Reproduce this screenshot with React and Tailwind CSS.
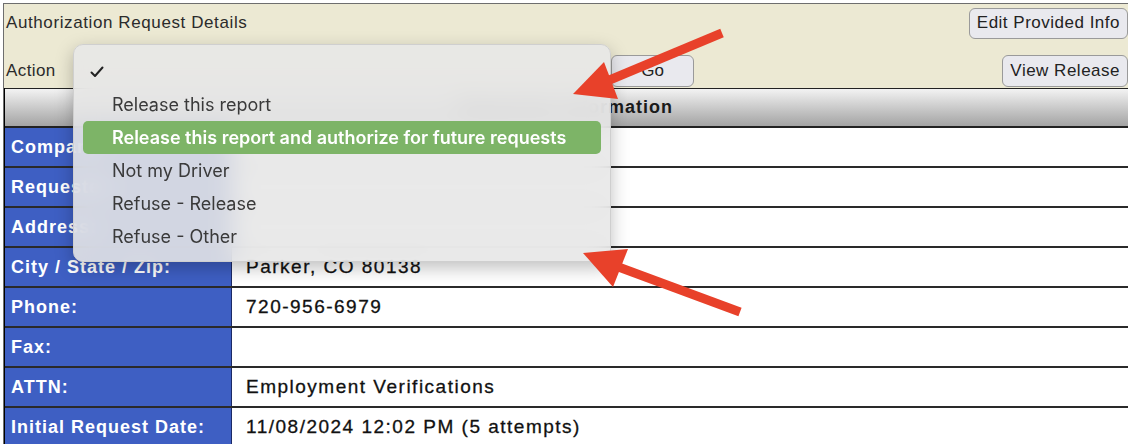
const rows = [
  { label: 'Company:', value: '' },
  { label: 'Requester:', value: '' },
  { label: 'Address:', value: '' },
  { label: 'City / State / Zip:', value: 'Parker, CO 80138' },
  { label: 'Phone:', value: '720-956-6979' },
  { label: 'Fax:', value: '' },
  { label: 'ATTN:', value: 'Employment Verifications' },
  { label: 'Initial Request Date:', value: '11/08/2024 12:02 PM (5 attempts)' },
];

const options = [
  'Release this report',
  'Release this report and authorize for future requests',
  'Not my Driver',
  'Refuse - Release',
  'Refuse - Other',
];

function Arrows() {
  return (
    <svg className="absolute inset-0 pointer-events-none" width="1128" height="444" viewBox="0 0 1128 444">
      <line x1="722" y1="33" x2="600" y2="84" stroke="#e8412a" strokeWidth="9" />
      <polygon points="573,94 604,62 618,99" fill="#e8412a" />
      <line x1="740" y1="312" x2="605" y2="262" stroke="#e8412a" strokeWidth="9" />
      <polygon points="583,253 628,249 613,287" fill="#e8412a" />
    </svg>
  );
}

export default function App() {
  return (
    <div className="relative w-[1128px] h-[444px] overflow-hidden bg-white font-['Liberation_Sans',sans-serif]">
      <div className="mt-[3px] ml-[3px] border-t border-l border-[#6e6e6e] h-[441px] flex flex-col">
        {/* details header */}
        <div className="bg-[#ece9d3] h-[84px] flex flex-col pl-[2px] text-[#2b2b2b]">
          <div className="flex items-center justify-between h-[36px] pt-[2px]">
            <span className="text-[17px] tracking-[0.6px]">Authorization Request Details</span>
            <button className="h-[31px] px-[7px] rounded-[6px] border border-[#9a9a9a] bg-[#e9e9ee] text-[17px] tracking-[0.5px] text-[#222]">
              Edit Provided Info
            </button>
          </div>
          <div className="flex items-center h-[48px] pt-[14px]">
            <span className="text-[17px] tracking-[0.4px] w-[605px]">Action</span>
            <button className="h-[32px] w-[83px] rounded-[6px] border border-[#9a9a9a] bg-[#e9e9ee] text-[17px] text-[#222]">
              Go
            </button>
            <div className="flex-1" />
            <button className="h-[32px] px-[7px] rounded-[6px] border border-[#9a9a9a] bg-[#e9e9ee] text-[17px] tracking-[0.5px] text-[#222]">
              View Release
            </button>
          </div>
        </div>

        {/* table */}
        <div className="border-l border-black flex-1 flex flex-col">
          <div className="h-[40px] shrink-0 bg-linear-to-b from-[#f3f3f3] to-[#a4a4a4] border-t border-b-2 border-[#222] flex items-center justify-center">
            <span className="text-[18px] font-bold tracking-[1px] text-[#1a1a1a]">Requester Information</span>
          </div>
          {rows.map((r) => (
            <div key={r.label} className="h-[40px] shrink-0 flex border-b-2 border-[#2a2a2a]">
              <div className="w-[227px] shrink-0 bg-[#3e5fc3] border-r border-[#1c2a66] flex items-center pl-[6px]">
                <span className="text-white font-bold text-[18px] tracking-[1px]">{r.label}</span>
              </div>
              <div className="flex-1 flex items-center pl-[14px]">
                <span className="text-[19px] tracking-[1.5px] text-[#111] [-webkit-text-stroke:0.3px_#111]">{r.value}</span>
              </div>
            </div>
          ))}
        </div>
      </div>

      {/* open action dropdown */}
      <div className="absolute left-[73px] top-[44px] w-[538px] h-[218px] rounded-[10px] bg-[rgba(231,231,231,0.88)] backdrop-blur-md shadow-[0_6px_18px_rgba(0,0,0,0.25)] border border-[#cfcfcf] px-[9px] pt-[10px] text-[18px] text-[#3a3a3a] font-['Inter',sans-serif]">
        <div className="h-[33px] flex items-center pl-[7px]">
          <svg width="14" height="12" viewBox="0 0 14 12">
            <path d="M1.5 6.5 L5 10 L12.5 1.5" fill="none" stroke="#222" strokeWidth="2" strokeLinecap="round" strokeLinejoin="round" />
          </svg>
        </div>
        {options.map((o, i) => (
          <div
            key={o}
            className={
              i === 1
                ? 'h-[33px] flex items-center pl-[29px] rounded-[5px] bg-[#7db467] text-white font-semibold'
                : 'h-[33px] flex items-center pl-[29px]'
            }
          >
            {o}
          </div>
        ))}
      </div>

      <Arrows />
    </div>
  );
}
